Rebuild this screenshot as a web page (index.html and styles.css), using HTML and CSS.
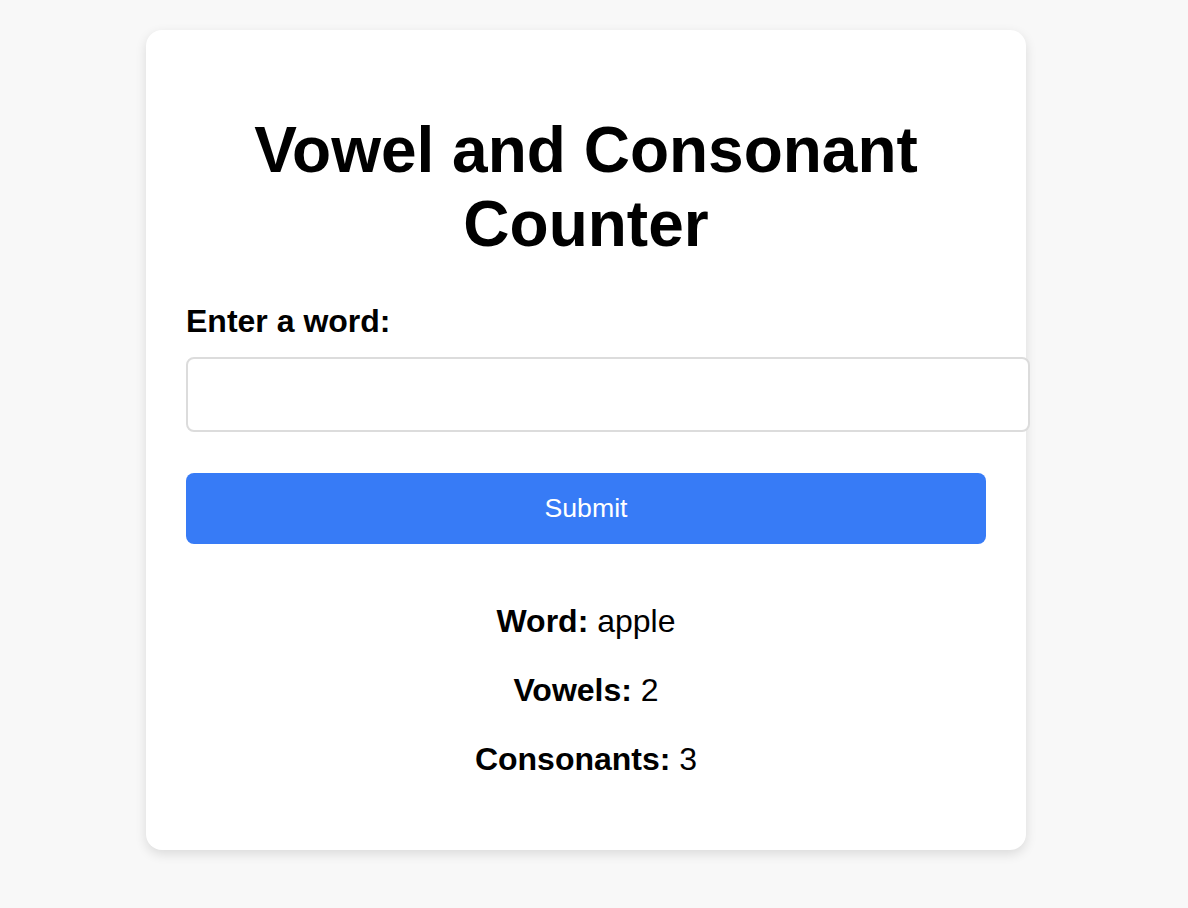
FILE: index.html
```html
<!DOCTYPE html>
<html lang="en">
<head>
<meta charset="utf-8">
<title>Vowel and Consonant Counter</title>
<link rel="stylesheet" href="styles.css">
</head>
<body>
  <main class="card">
    <h1 class="title">Vowel and Consonant Counter</h1>
    <form class="form">
      <label class="label" for="word">Enter a word:</label>
      <input class="input" id="word" type="text">
      <button class="button" type="button">Submit</button>
    </form>
    <section class="results">
      <p class="line"><strong>Word:</strong> apple</p>
      <p class="line"><strong>Vowels:</strong> 2</p>
      <p class="line"><strong>Consonants:</strong> 3</p>
    </section>
  </main>
</body>
</html>
```
FILE: styles.css
```css
html, body {
  margin: 0;
  padding: 0;
}
body {
  background: #f8f8f8;
  font-family: "Liberation Sans", Arial, sans-serif;
  color: #000;
  display: flex;
  justify-content: center;
  padding-right: 16px;
  min-height: 908px;
  box-sizing: border-box;
}
.card {
  width: 880px;
  box-sizing: border-box;
  margin: 30px 0 0;
  align-self: flex-start;
  background: #fff;
  border-radius: 16px;
  padding: 40px;
  box-shadow: 0 4px 12px rgba(0, 0, 0, 0.12);
  text-align: left;
}
.title {
  font-size: 64px;
  font-weight: bold;
  text-align: center;
  margin: 43px 0 42px;
  line-height: normal;
}
.form {
  display: flex;
  flex-direction: column;
  align-items: flex-start;
}
.label {
  display: block;
  font-size: 32px;
  font-weight: bold;
  line-height: normal;
  margin-bottom: 17px;
}
.input {
  width: 800px;
  box-sizing: content-box;
  padding: 20px;
  border: 2px solid #dcdcdc;
  border-radius: 8px;
  font-family: "Liberation Sans", Arial, sans-serif;
  font-size: 26.67px;
  line-height: normal;
  margin: 0 0 41px;
  outline: none;
  background: #fff;
}
.button {
  width: 800px;
  padding: 20px;
  border: none;
  border-radius: 8px;
  background: #377bf6;
  color: #fff;
  font-family: "Liberation Sans", Arial, sans-serif;
  font-size: 26.67px;
  line-height: normal;
  cursor: pointer;
}
.results {
  padding-top: 27px;
  text-align: center;
}
.line {
  font-size: 32px;
  line-height: normal;
  margin: 32px 0;
}
```
